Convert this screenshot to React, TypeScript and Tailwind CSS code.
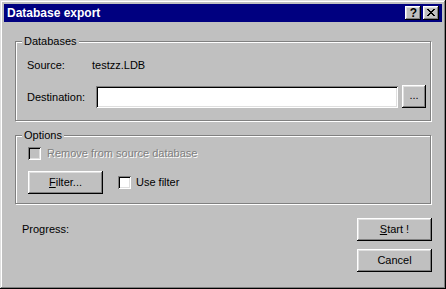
import type { ReactNode } from 'react';

// classic 3D bevels
const RAISED =
  'shadow-[inset_-1px_-1px_#000,inset_1px_1px_#fff,inset_-2px_-2px_#808080,inset_2px_2px_#dfdfdf]';
const SUNKEN =
  'shadow-[inset_1px_1px_#808080,inset_-1px_-1px_#fff,inset_2px_2px_#000,inset_-2px_-2px_#dfdfdf]';

function GroupBox({ title, className, children }: { title: string; className?: string; children: ReactNode }) {
  return (
    <fieldset
      className={`border border-[#808080] shadow-[1px_1px_0_#fff,inset_1px_1px_0_#fff] ${className ?? ''}`}
    >
      <legend className="ml-[6px] bg-[#c0c0c0] px-[2px] leading-[13px]">{title}</legend>
      {children}
    </fieldset>
  );
}

function PushButton({ children, className }: { children: ReactNode; className?: string }) {
  return (
    <button
      type="button"
      className={`flex h-[23px] w-[75px] items-center justify-center bg-[#c0c0c0] leading-[13px] ${RAISED} ${className ?? ''}`}
    >
      {children}
    </button>
  );
}

function CheckBox({ disabled }: { disabled?: boolean }) {
  return (
    <span
      className={`block h-[13px] w-[13px] shrink-0 ${disabled ? 'bg-[#c0c0c0]' : 'bg-white'} ${SUNKEN}`}
    />
  );
}

function CloseGlyph() {
  const px: [number, number][] = [
    [0, 0], [1, 0], [6, 0], [7, 0],
    [1, 1], [2, 1], [5, 1], [6, 1],
    [2, 2], [3, 2], [4, 2], [5, 2],
    [3, 3], [4, 3],
    [2, 4], [3, 4], [4, 4], [5, 4],
    [1, 5], [2, 5], [5, 5], [6, 5],
    [0, 6], [1, 6], [6, 6], [7, 6],
  ];
  return (
    <svg width="8" height="7" viewBox="0 0 8 7" shapeRendering="crispEdges" aria-hidden>
      {px.map(([x, y]) => (
        <rect key={`${x}-${y}`} x={x} y={y} width="1" height="1" fill="#000" />
      ))}
    </svg>
  );
}

export default function App() {
  return (
    <div className="flex h-[289px] w-[446px] flex-col bg-[#c0c0c0] p-[4px] font-['Liberation_Sans',Arial,sans-serif] text-[11px] text-black shadow-[inset_-1px_-1px_#000,inset_1px_1px_#dfdfdf,inset_-2px_-2px_#808080,inset_2px_2px_#fff]">
      {/* title bar */}
      <div className="flex h-[18px] items-center bg-[#000080] pl-[3px] pr-[3px]">
        <span className="flex-1 text-[12px] font-bold leading-[14px] text-white">Database export</span>
        <button
          type="button"
          className={`flex h-[14px] w-[16px] items-center justify-center bg-[#c0c0c0] pl-px text-[12px] font-bold leading-[12px] ${RAISED}`}
        >
          ?
        </button>
        <button
          type="button"
          className={`ml-[2px] flex h-[14px] w-[16px] items-center justify-center bg-[#c0c0c0] pb-px ${RAISED}`}
        >
          <CloseGlyph />
        </button>
      </div>

      <div className="flex flex-1 flex-col px-[11px]">
        <GroupBox title="Databases" className="mt-[13px]">
          <div className="flex flex-col pb-[12px] pl-[11px] pr-[4px] pt-[11px]">
            <div className="flex h-[13px] items-center leading-[13px]">
              <span className="w-[65px]">Source:</span>
              <span>testzz.LDB</span>
            </div>
            <div className="mt-[13px] flex items-end">
              <span className="mb-[4px] w-[69px] leading-[13px]">Destination:</span>
              <div className={`h-[22px] flex-1 bg-white ${SUNKEN}`} />
              <button
                type="button"
                className={`ml-[4px] flex h-[23px] w-[24px] items-center justify-center bg-[#c0c0c0] pb-[2px] leading-[13px] ${RAISED}`}
              >
                ...
              </button>
            </div>
          </div>
        </GroupBox>

        <GroupBox title="Options" className="mt-[8px]">
          <div className="flex flex-col pb-[9px] pl-[12px] pt-[5px]">
            <div className="flex h-[13px] items-center gap-[6px]">
              <CheckBox disabled />
              <span className="leading-[13px] text-[#808080] [text-shadow:1px_1px_0_#fff]">
                Remove from source database
              </span>
            </div>
            <div className="mt-[11px] flex items-center">
              <PushButton>
                <span>
                  <span className="underline">F</span>ilter...
                </span>
              </PushButton>
              <span className="ml-[15px] flex items-center gap-[5px]">
                <CheckBox />
                <span className="leading-[13px]">Use filter</span>
              </span>
            </div>
          </div>
        </GroupBox>

        <div className="-mr-px mt-[14px] flex items-start justify-between">
          <span className="pl-[7px] pt-[5px] leading-[13px]">Progress:</span>
          <div className="flex flex-col gap-[8px]">
            <PushButton>
              <span>
                <span className="underline">S</span>tart !
              </span>
            </PushButton>
            <PushButton>Cancel</PushButton>
          </div>
        </div>
      </div>
    </div>
  );
}
